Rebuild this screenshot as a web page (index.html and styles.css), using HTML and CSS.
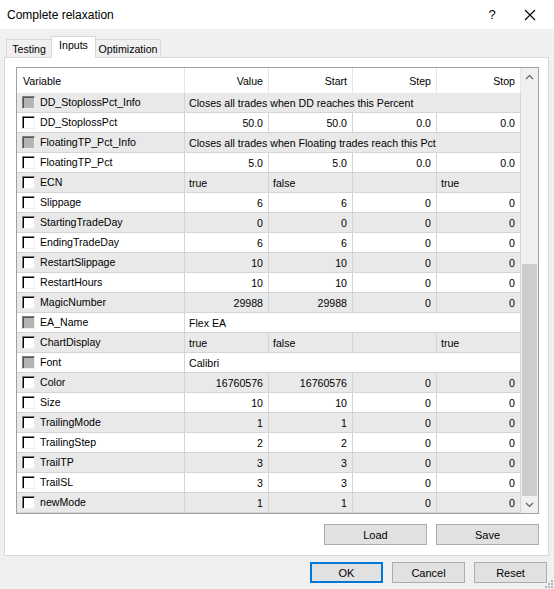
FILE: index.html
```html
<!DOCTYPE html>
<html lang="en">
<head>
    <meta charset="UTF-8">
    <title>Complete relaxation</title>
    <link rel="stylesheet" href="styles.css">
</head>
<body>
    <div class="window">
        <div class="titlebar">
            <span class="title">Complete relaxation</span>
            <span class="help">?</span>
            <span class="close">
                <svg width="12" height="12" viewBox="0 0 12 12"><path d="M1 1 L11 11 M11 1 L1 11" stroke="#000" stroke-width="1.1" fill="none"/></svg>
            </span>
        </div>

        <div class="tabs">
            <div class="tab tab-testing">Testing</div>
            <div class="tab tab-inputs active">Inputs</div>
            <div class="tab tab-optim">Optimization</div>
        </div>

        <div class="panel">
            <div class="grid">
                <table class="inputs">
                    <colgroup>
                        <col class="col-var"><col class="col-num"><col class="col-num"><col class="col-num"><col class="col-num">
                    </colgroup>
                    <thead>
                        <tr>
                            <th class="left">Variable</th>
                            <th>Value</th>
                            <th>Start</th>
                            <th>Step</th>
                            <th>Stop</th>
                        </tr>
                    </thead>
                    <tbody>
                        <tr class="alt"><td class="var"><span class="check off"></span>DD_StoplossPct_Info</td><td class="text" colspan="4">Closes all trades when DD reaches this Percent</td></tr>
                        <tr><td class="var"><span class="check"></span>DD_StoplossPct</td><td>50.0</td><td>50.0</td><td>0.0</td><td>0.0</td></tr>
                        <tr class="alt"><td class="var"><span class="check off"></span>FloatingTP_Pct_Info</td><td class="text" colspan="4">Closes all trades when Floating trades reach this Pct</td></tr>
                        <tr><td class="var"><span class="check"></span>FloatingTP_Pct</td><td>5.0</td><td>5.0</td><td>0.0</td><td>0.0</td></tr>
                        <tr class="alt"><td class="var"><span class="check"></span>ECN</td><td class="text">true</td><td class="text">false</td><td></td><td class="text">true</td></tr>
                        <tr><td class="var"><span class="check"></span>Slippage</td><td>6</td><td>6</td><td>0</td><td>0</td></tr>
                        <tr class="alt"><td class="var"><span class="check"></span>StartingTradeDay</td><td>0</td><td>0</td><td>0</td><td>0</td></tr>
                        <tr><td class="var"><span class="check"></span>EndingTradeDay</td><td>6</td><td>6</td><td>0</td><td>0</td></tr>
                        <tr class="alt"><td class="var"><span class="check"></span>RestartSlippage</td><td>10</td><td>10</td><td>0</td><td>0</td></tr>
                        <tr><td class="var"><span class="check"></span>RestartHours</td><td>10</td><td>10</td><td>0</td><td>0</td></tr>
                        <tr class="alt"><td class="var"><span class="check"></span>MagicNumber</td><td>29988</td><td>29988</td><td>0</td><td>0</td></tr>
                        <tr><td class="var"><span class="check off"></span>EA_Name</td><td class="text" colspan="4">Flex EA</td></tr>
                        <tr class="alt"><td class="var"><span class="check"></span>ChartDisplay</td><td class="text">true</td><td class="text">false</td><td></td><td class="text">true</td></tr>
                        <tr><td class="var"><span class="check off"></span>Font</td><td class="text" colspan="4">Calibri</td></tr>
                        <tr class="alt"><td class="var"><span class="check"></span>Color</td><td>16760576</td><td>16760576</td><td>0</td><td>0</td></tr>
                        <tr><td class="var"><span class="check"></span>Size</td><td>10</td><td>10</td><td>0</td><td>0</td></tr>
                        <tr class="alt"><td class="var"><span class="check"></span>TrailingMode</td><td>1</td><td>1</td><td>0</td><td>0</td></tr>
                        <tr><td class="var"><span class="check"></span>TrailingStep</td><td>2</td><td>2</td><td>0</td><td>0</td></tr>
                        <tr class="alt"><td class="var"><span class="check"></span>TrailTP</td><td>3</td><td>3</td><td>0</td><td>0</td></tr>
                        <tr><td class="var"><span class="check"></span>TrailSL</td><td>3</td><td>3</td><td>0</td><td>0</td></tr>
                        <tr class="alt"><td class="var"><span class="check"></span>newMode</td><td>1</td><td>1</td><td>0</td><td>0</td></tr>
                    </tbody>
                </table>
                <div class="scrollbar">
                    <div class="arrow">
                        <svg width="9" height="6" viewBox="0 0 9 6"><path d="M1 5 L4.5 1.5 L8 5" stroke="#606060" stroke-width="1.2" fill="none"/></svg>
                    </div>
                    <div class="track"><div class="thumb"></div></div>
                    <div class="arrow">
                        <svg width="9" height="6" viewBox="0 0 9 6"><path d="M1 1 L4.5 4.5 L8 1" stroke="#606060" stroke-width="1.2" fill="none"/></svg>
                    </div>
                </div>
            </div>
            <div class="panel-buttons">
                <button>Load</button>
                <button>Save</button>
            </div>
        </div>

        <div class="dialog-buttons">
            <button class="default">OK</button>
            <button>Cancel</button>
            <button>Reset</button>
        </div>

        <svg class="grip" width="8" height="8" viewBox="0 0 8 8">
            <rect x="6" y="0" width="2" height="2" fill="#b8b8b8"/>
            <rect x="3" y="3" width="2" height="2" fill="#b8b8b8"/>
            <rect x="6" y="3" width="2" height="2" fill="#b8b8b8"/>
            <rect x="0" y="6" width="2" height="2" fill="#b8b8b8"/>
            <rect x="3" y="6" width="2" height="2" fill="#b8b8b8"/>
            <rect x="6" y="6" width="2" height="2" fill="#b8b8b8"/>
        </svg>
    </div>
</body>
</html>
```

FILE: styles.css
```css
body {
    margin: 0;
    font-family: 'Liberation Sans', Arial, sans-serif;
    color: #000;
    background: #f0f0f0;
}

.window {
    position: relative;
    width: 554px;
    height: 589px;
    background: #f0f0f0;
    display: flex;
    flex-direction: column;
    overflow: hidden;
}

.titlebar {
    height: 29px;
    flex-shrink: 0;
    background: #fff;
    display: flex;
    align-items: center;
    padding-left: 7px;
    font-size: 12px;
}

.title {
    flex: 1;
}

.help {
    width: 46px;
    margin-right: -8px;
    text-align: center;
    font-size: 13px;
}

.close {
    width: 46px;
    height: 29px;
    display: flex;
    align-items: center;
    justify-content: center;
    margin-right: 1px;
}

.tabs {
    display: flex;
    align-items: flex-end;
    height: 21px;
    flex-shrink: 0;
    margin-top: 7px;
    padding-left: 6px;
    font-size: 10.6px;
}

.tab {
    height: 18px;
    line-height: 19px;
    text-align: center;
    border: 1px solid #d9d9d9;
    border-bottom: none;
    background: #f0f0f0;
    box-sizing: border-box;
}

.tab-testing {
    width: 46px;
}

.tab-inputs {
    width: 45px;
}

.tab-optim {
    width: 66px;
    margin-left: -1px;
}

.tab.active {
    height: 22px;
    line-height: 17px;
    background: #fff;
    margin-left: -1px;
    margin-bottom: -1px;
    position: relative;
    z-index: 1;
}

.panel {
    height: 499px;
    flex-shrink: 0;
    box-sizing: border-box;
    margin: 0 5px 0 4px;
    background: #fff;
    border: 1px solid #d9d9d9;
    padding: 9px 9px 0 11px;
    display: flex;
    flex-direction: column;
}

.grid {
    display: flex;
    width: 523px;
    height: 447px;
    box-sizing: border-box;
    border: 1px solid #a0a0a0;
    background: #fff;
    overflow: hidden;
}

.inputs {
    width: 504px;
    height: 445px;
    border-collapse: separate;
    border-spacing: 0;
    table-layout: fixed;
    font-size: 10.6px;
}

.col-var {
    width: 168px;
}

.col-num {
    width: 84px;
}

.inputs th {
    height: 25px;
    padding: 0 5px 0 0;
    font-weight: normal;
    text-align: right;
    border-right: 1px solid #e5e5e5;
    box-sizing: border-box;
}

.inputs th.left {
    text-align: left;
    padding-left: 6px;
}

.inputs td {
    height: 20px;
    padding: 0 5px 0 0;
    text-align: right;
    border-right: 1px solid #d5d5d5;
    border-bottom: 1px solid #d5d5d5;
    white-space: nowrap;
    overflow: hidden;
    box-sizing: border-box;
}

.inputs td.text {
    text-align: left;
    padding-left: 4px;
}

.inputs td.var {
    text-align: left;
    padding-left: 5px;
}

.inputs tr.alt td {
    background: #e9e9e9;
}

.check {
    display: inline-block;
    width: 11px;
    height: 11px;
    margin-right: 5px;
    vertical-align: -3px;
    background: #fff;
    border: 1px solid;
    border-color: #808080 #f0f0f0 #f0f0f0 #808080;
    box-shadow: inset 1px 1px 0 #000;
}

.check.off {
    background: #b4b4b4;
    box-shadow: inset 1px 1px 0 #555;
}

.scrollbar {
    width: 17px;
    display: flex;
    flex-direction: column;
    background: #f0f0f0;
}

.arrow {
    height: 17px;
    display: flex;
    align-items: center;
    justify-content: center;
}

.track {
    flex: 1;
    padding-top: 179px;
    display: flex;
    flex-direction: column;
}

.thumb {
    flex: 1;
    margin: 0 1px;
    background: #cdcdcd;
}

.panel-buttons {
    display: flex;
    justify-content: flex-end;
    gap: 9px;
    margin-top: 10px;
}

button {
    font-family: 'Liberation Sans', Arial, sans-serif;
    font-size: 11px;
    color: #000;
    background: #e1e1e1;
    border: 1px solid #adadad;
    padding: 0;
}

.panel-buttons button {
    width: 103px;
    height: 21px;
}

.dialog-buttons {
    display: flex;
    justify-content: flex-end;
    gap: 9px;
    margin: 6px 7px 0 0;
}

.dialog-buttons button {
    width: 73px;
    height: 21px;
}

.dialog-buttons button.default {
    border: 2px solid #0078d7;
}

.grip {
    position: absolute;
    right: 1px;
    bottom: 1px;
}
```
